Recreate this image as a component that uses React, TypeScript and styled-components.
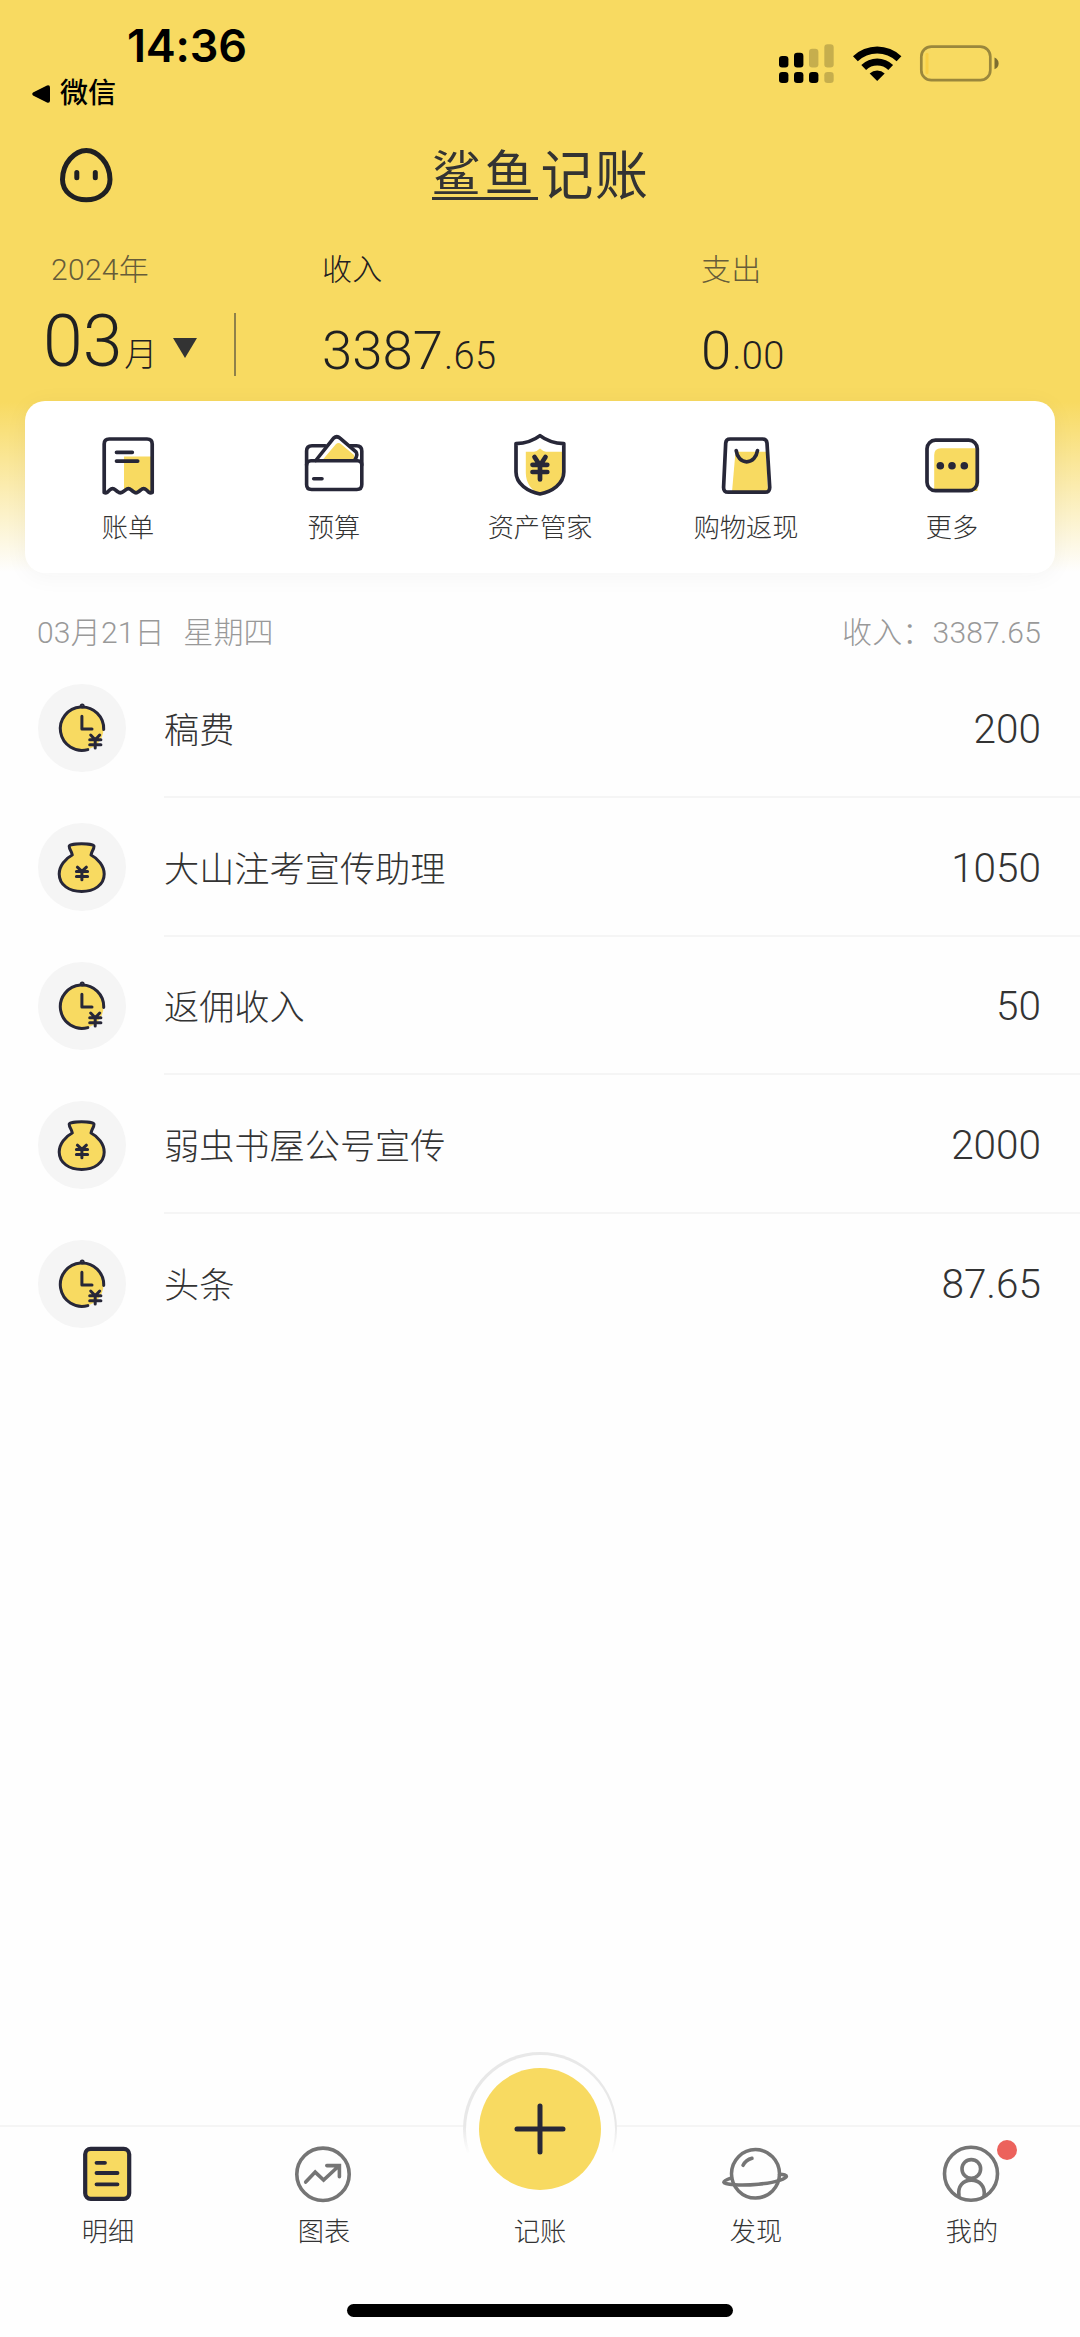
import React from 'react';
import styled, { createGlobalStyle } from 'styled-components';

const YELLOW = '#f8da61';
const INK = '#272738';
const GREY = '#757575';

const GlobalStyle = createGlobalStyle`
  *, *::before, *::after { box-sizing: border-box; }
  body { margin: 0; background: #fefefe; }
  svg { display: block; flex: none; overflow: visible; }
`;

const Screen = styled.div`
  width: 1080px;
  height: 2337px;
  display: flex;
  flex-direction: column;
  overflow: hidden;
  background: linear-gradient(${YELLOW} 0, ${YELLOW} 402px, #fefefe 572px);
  color: #1f2022;
  font-family: Roboto, 'Noto Sans CJK SC', sans-serif;
  font-weight: 300;
`;

const StatusBar = styled.header`
  height: 118px;
  display: flex;
  justify-content: space-between;
  padding: 0 80px 0 32px;
  color: #000;
`;

const StatusLeft = styled.div`
  display: flex;
  flex-direction: column;
`;

const Clock = styled.time`
  margin: 21px 0 0 95px;
  font: 600 45px/50px Inter, sans-serif;
  letter-spacing: -0.2px;
`;

const BackLink = styled.div`
  display: flex;
  align-items: center;
  gap: 10px;
  margin-top: 3px;
  font-size: 28px;
  line-height: 40px;
  font-weight: 500;
`;

const StatusIcons = styled.div`
  display: flex;
  align-items: flex-start;
  gap: 18px;
  padding-top: 44px;
`;

const TitleBar = styled.div`
  height: 117px;
  display: grid;
  grid-template-columns: 1fr auto 1fr;
  align-items: center;
  padding: 0 59px 3px;
`;

const Logo = styled.h1`
  margin: 0 -1px 0 0;
  height: 50px;
  display: flex;
  align-items: flex-start;
  font: 400 53px/44px 'Noto Sans CJK SC', sans-serif;
  letter-spacing: 1.5px;
  color: #333;
`;

const LogoUnderlined = styled.span`
  width: 106px;
  height: 50px;
  margin-right: 3px;
  border-bottom: 3px solid #333;
  font-size: 49px;
  line-height: 40px;
  letter-spacing: 4px;
`;

const Summary = styled.section`
  height: 166px;
  display: flex;
`;

const MonthPicker = styled.div`
  width: 236px;
  padding: 15px 0 0 43px;
  display: flex;
  flex-direction: column;
`;

const Label = styled.div<{ $muted?: boolean; $indent?: number }>`
  height: 40px;
  line-height: 40px;
  font-size: 30px;
  letter-spacing: 0.3px;
  white-space: nowrap;
  padding-left: ${p => p.$indent ?? 0}px;
  color: ${p => (p.$muted ? '#665c39' : '#1f2022')};
`;

const MonthRow = styled.div`
  display: flex;
  align-items: center;
  justify-content: space-between;
  height: 63px;
  margin-top: 23px;
  border-right: 2px solid #8f814a;
`;

const MonthValue = styled.div`
  display: flex;
  align-items: baseline;
  padding-top: 7px;
  font-size: 71.5px;
  line-height: 63px;
  small { font-size: 33px; margin-left: 2px; }
`;

const Caret = styled.div`
  width: 0;
  margin: 7px 37px 0 0;
  border: 12px solid transparent;
  border-top: 20px solid #333;
  border-bottom: 0;
`;

const Total = styled.div<{ $width: number }>`
  width: ${p => p.$width}px;
  padding: 15px 0 0;
`;

const Totals = styled.div`
  display: flex;
  padding-left: 86px;
`;

const Money = styled.div`
  margin-top: 28px;
  font-size: 54.5px;
  line-height: 64px;
  small { font-size: 38px; letter-spacing: 0.4px; margin-left: 1px; }
`;

const MenuCard = styled.nav`
  width: 1030px;
  height: 172px;
  margin: 0 25px;
  flex: none;
  display: grid;
  grid-template-columns: repeat(5, 1fr);
  background: #fff;
  border-radius: 20px;
  box-shadow: 0 3px 24px rgba(40, 40, 40, 0.045);
`;

const MenuItem = styled.div`
  display: flex;
  flex-direction: column;
  align-items: center;
  padding-top: 31px;
  font-size: 26.2px;
  line-height: 36px;
  color: #333;
  gap: 12px;
`;

const DayHeader = styled.div`
  display: flex;
  justify-content: space-between;
  align-items: center;
  flex: none;
  height: 54px;
  margin-top: 30px;
  margin-bottom: 2px;
  padding: 0 39px 0 37px;
  font-size: 30px;
  letter-spacing: 0.2px;
  word-spacing: 1.7px;
  color: #999;
  white-space: pre;
`;

const List = styled.ul`
  margin: 0;
  padding: 0 0 0 38px;
  list-style: none;
`;

const Row = styled.li`
  display: flex;
  align-items: center;
  height: 138.8px;
  gap: 38px;
`;

const Badge = styled.div`
  width: 88px;
  height: 88px;
  border-radius: 50%;
  background: #f5f5f5;
  flex: none;
`;

const RowBody = styled.div<{ $last: boolean }>`
  flex: 1;
  height: 100%;
  display: flex;
  align-items: center;
  justify-content: space-between;
  padding-right: 39px;
  border-bottom: 2px solid ${p => (p.$last ? 'transparent' : '#f5f5f5')};
  font-size: 35.2px;
  color: #333;
`;

const Amount = styled.span`
  padding-top: 3px;
  font-size: 40.5px;
`;

const TabBar = styled.nav`
  position: relative;
  margin-top: auto;
  height: 212px;
  flex: none;
  display: flex;
  flex-direction: column;
  align-items: center;
  justify-content: space-between;
  padding-bottom: 20px;
  background: #fefefe;
  border-top: 2px solid #f5f5f5;
`;

const Tabs = styled.div`
  width: 100%;
  display: grid;
  grid-template-columns: repeat(5, 1fr);
`;

const Tab = styled.div`
  position: relative;
  display: flex;
  flex-direction: column;
  align-items: center;
  padding-top: 14px;
  font-size: 26.2px;
  line-height: 36px;
  color: #333;
  gap: 7px;
`;

const IconSlot = styled.div`
  width: 66px;
  height: 66px;
  margin-left: -2px;
`;

const RedDot = styled.i`
  position: absolute;
  top: 13px;
  left: 133px;
  width: 20px;
  height: 20px;
  border-radius: 50%;
  background: #ec625c;
`;

const AddRing = styled.div`
  position: absolute;
  top: -75px;
  left: 463px;
  width: 154px;
  height: 154px;
  border-radius: 50%;
  background: linear-gradient(#e8e8e8 0, #e8e8e8 48%, #fefefe 66%);
  padding: 2.5px;
`;

const AddGap = styled.div`
  width: 100%;
  height: 100%;
  border-radius: 50%;
  background: #fefefe;
  display: grid;
  place-items: center;
`;

const AddButton = styled.div`
  width: 122px;
  height: 122px;
  border-radius: 50%;
  background: ${YELLOW};
  display: grid;
  place-items: center;
`;

const HomeIndicator = styled.div`
  width: 386px;
  height: 13px;
  border-radius: 7px;
  background: #000;
`;

const Stroke = ({ children, color = INK, w = 3.7, size = 66 }: { children: React.ReactNode; color?: string; w?: number; size?: number }) => (
  <svg width={size} height={size} viewBox={`0 0 ${size} ${size}`} fill="none" stroke={color} strokeWidth={w} strokeLinecap="round" strokeLinejoin="round">
    {children}
  </svg>
);

const Signal = () => (
  <svg width="56" height="40" viewBox="0 0 56 40">
    <rect x="0" y="12" width="9.4" height="11.5" rx="3.2" />
    <rect x="15" y="8.7" width="9.4" height="14.8" rx="3.2" />
    <rect x="30" y="4.8" width="9.4" height="18.7" rx="3.2" opacity=".2" />
    <rect x="45.3" y="0.3" width="9.4" height="23.2" rx="3.2" opacity=".2" />
    <rect x="0" y="28" width="9.4" height="11" rx="3.2" />
    <rect x="15" y="28" width="9.4" height="11" rx="3.2" />
    <rect x="30" y="28" width="9.4" height="11" rx="3.2" />
    <rect x="45.3" y="28" width="9.4" height="11" rx="3.2" opacity=".2" />
  </svg>
);

const Wifi = () => (
  <svg width="49" height="38" viewBox="0 0 49 38">
    <path d="M0 12.3a35 35 0 0 1 48.400 0L43.600 17.300a28 28 0 0 0-38.800 0z" />
    <path d="M8.300 20.900a23 23 0 0 1 31.800 0L35.300 26a16 16 0 0 0-22.200 0z" />
    <path d="M16.700 29.500a11 11 0 0 1 15 0L24.200 37z" />
  </svg>
);

const Battery = () => (
  <svg width="80" height="38" viewBox="0 0 80 38">
    <rect x="1.300" y="2.600" width="69" height="33.600" rx="10" fill="none" stroke="#000" strokeOpacity=".38" strokeWidth="2.700" />
    <rect x="5.500" y="8.700" width="3" height="21.500" rx="1.500" fill="#f8cf45" />
    <path d="M74.500 13.500c5.500 2 5.500 9.800 0 11.800z" opacity=".5" />
  </svg>
);

const Face = () => (
  <svg width="54" height="56" viewBox="0 0 54 56" fill="none" stroke="#1f2022" strokeWidth="5" strokeLinecap="round">
    <path d="M27.300 3.400C38.500 3.400 51 16 51 32.500C51 45 40 52.800 27.300 52.800S3.500 45 3.500 32.500C3.500 16 16 3.400 27.300 3.400Z" />
    <path d="M17.800 25.500v5.200M36.300 25.500v5.200" />
  </svg>
);

const BillIcon = () => (
  <Stroke>
    <path d="M29 24.500H56V60L48.600 56.500L41 60.500L33.400 56.500L29 58.500Z" fill={YELLOW} stroke="none" />
    <path d="M9.200 60.500V12Q9.200 7 14.200 7H52Q57.200 7 57.200 12V60.500Q55.500 61.500 54 60.300L51.500 58Q48.600 55.300 45.700 58L43.500 59.700Q41 61.800 38.500 59.700L36.300 58Q33.400 55.300 30.500 58L28 59.700Q25.200 61.800 22.700 59.700L20.500 58Q17.600 55.300 14.700 58L12.200 60.300Q10.700 61.500 9.200 60.500Z" />
    <path d="M21.500 20.300H37.300M21.500 29.100H42.700" />
  </Stroke>
);

const BudgetIcon = () => (
  <Stroke w={3.6}>
    <path d="M21.500 28L34.800 12.200Q37.500 9.800 40.200 12.200L53 23V28Z" fill={YELLOW} stroke="none" />
    <path d="M24.200 13.700H11Q5.600 13.700 5.600 19V52.500Q5.600 57.500 10.600 57.500H55.800Q60.800 57.500 60.800 52.500V19Q60.800 13.700 55.500 13.700H49" />
    <path d="M5.600 33Q5.600 28.700 10 28.700H56.500Q60.800 28.700 60.800 33" />
    <path d="M14.800 28.500L32.600 6.200Q35.800 3.300 39 6.200L54.700 19.600Q57.400 22.500 53.700 28.200" />
    <path d="M12.700 46.700H21" />
  </Stroke>
);

const AssetIcon = () => (
  <Stroke>
    <path d="M18.800 19.700H27Q30.500 19 33 16.500Q35.500 19 39 19.700H56.500V41C56.500 53 43 59 33 61.500C24 59 18.800 50 18.800 41Z" fill={YELLOW} stroke="none" />
    <path d="M33 3.600C26 9 18 11.300 9 11.600V40C9 52 21 59.500 33 62C45 59.500 56.800 52 56.800 40V11.600C48 11.300 40 9 33 3.600Z" />
    <path d="M27.500 25L33 33.500L38.500 25M33 33.500V47.500M25.500 32.800H40.300M25.500 40H40.300" strokeWidth="4.700" />
  </Stroke>
);

const ShopIcon = () => (
  <Stroke>
    <path d="M22.500 19.700H53L55 60H19Z" fill={YELLOW} stroke="none" />
    <path d="M17 7H49.500Q53.700 7 54 11.200L56.700 55Q57 60.200 52 60.200H15.300Q10.300 60.200 10.600 55L12.700 11.200Q13 7 17 7Z" />
    <path d="M23.200 18.500C24 25 28 29.800 33.700 29.800S43.500 25 44.500 18.500" />
  </Stroke>
);

const MoreIcon = () => (
  <Stroke>
    <path d="M22 16.200H58.500V59H15.200V23Q15.200 16.200 22 16.200Z" fill={YELLOW} stroke="none" />
    <rect x="8" y="8.200" width="50.300" height="50.500" rx="8.500" />
    <g fill={INK} stroke="none">
      <circle cx="21.300" cy="33.700" r="3.800" />
      <circle cx="33" cy="33.700" r="3.800" />
      <circle cx="45.300" cy="33.700" r="3.800" />
    </g>
  </Stroke>
);

const PartTimeIcon = () => (
  <Stroke size={88} w={3}>
    <circle cx="44" cy="44.700" r="21.500" fill={YELLOW} stroke="none" />
    <path d="M65.700 45.500A21.700 21.700 0 1 0 49.800 65.600" />
    <circle cx="44.200" cy="22" r="1" />
    <path d="M43.900 32.300V45H54" />
    <g transform="translate(57.200 57)"><path d="M-4.500-6L0-1.300L4.500-6M0-1.300V7M-5.500-1.300H5.700M-5.500 3.700H5.700" /></g>
  </Stroke>
);

const MoneyBagIcon = () => (
  <Stroke size={88} w={3}>
    <path d="M34.300 32C33.800 28 31.200 26.500 31.200 23.200C31.200 20 56 20 56 23.200C56 26.500 53.600 28 53 32C60 35.500 66.200 43 66.200 51C66.200 62 56 68.500 43.700 68.500S21.200 62 21.200 51C21.200 43 27.300 35.500 34.300 32Z" fill={YELLOW} />
    <g transform="translate(43.900 49.700)"><path d="M-4.500-5.500L0-1.300L4.500-5.500M0-1.300V7M-5.500-1.300H5.700M-5.500 3.700H5.700" /></g>
  </Stroke>
);

const DetailIcon = () => (
  <Stroke w={4.2}>
    <rect x="11.200" y="7.800" width="44" height="50" rx="5.500" fill={YELLOW} />
    <path d="M22.500 21.800H31M22.500 32H43.500M22.500 43.300H43.500" strokeWidth="3.800" />
  </Stroke>
);

const ChartIcon = () => (
  <Stroke color={GREY} w={3.6}>
    <g transform="translate(0 .8)">
      <circle cx="33" cy="32.500" r="26.200" />
      <path d="M15.700 40.300L25.200 30.300L33.600 38.300L49 24M36.800 23.800H49.400V35" strokeLinejoin="miter" />
    </g>
  </Stroke>
);

const DiscoverIcon = () => (
  <Stroke color={GREY} w={3.5}>
    <g transform="translate(.5 .8)">
      <ellipse cx="33" cy="32" rx="24" ry="24.200" />
      <path d="M9 36C-1.500 39.500-2 42 12 43C26 44 47 42 57 38.500C66 35.500 66.500 33 57 32.500" />
      <path d="M20.500 23.500Q23.500 18 29.500 16.500" />
    </g>
  </Stroke>
);

const MineIcon = () => (
  <Stroke color={GREY} w={3.6}>
    <g transform="translate(0 .6)">
      <circle cx="33" cy="32.200" r="26.500" />
      <circle cx="33.300" cy="27.300" r="9.300" />
      <path d="M21 54C19.500 45 25 38.500 33.300 38.500S47.500 45 46 54" />
    </g>
  </Stroke>
);

const menu = [
  { label: '账单', icon: <BillIcon /> },
  { label: '预算', icon: <BudgetIcon /> },
  { label: '资产管家', icon: <AssetIcon /> },
  { label: '购物返现', icon: <ShopIcon /> },
  { label: '更多', icon: <MoreIcon /> },
];

const records = [
  { name: '稿费', amount: '200', kind: 'time' },
  { name: '大山注考宣传助理', amount: '1050', kind: 'bag' },
  { name: '返佣收入', amount: '50', kind: 'time' },
  { name: '弱虫书屋公号宣传', amount: '2000', kind: 'bag' },
  { name: '头条', amount: '87.65', kind: 'time' },
];

const tabs = [
  { label: '明细', icon: <DetailIcon /> },
  { label: '图表', icon: <ChartIcon /> },
  { label: '记账', icon: null },
  { label: '发现', icon: <DiscoverIcon /> },
  { label: '我的', icon: <MineIcon />, dot: true },
];

export default function App() {
  return (
    <>
      <GlobalStyle />
      <Screen>
        <StatusBar>
          <StatusLeft>
            <Clock>14:36</Clock>
            <BackLink>
              <svg width="18" height="18" viewBox="0 0 18 18"><path d="M1 7.500L15 .5Q18 -.3 18 2.500V15.500Q18 18.300 15 17.500L1 10.500Q-.8 9 1 7.500Z" /></svg>
              <span>微信</span>
            </BackLink>
          </StatusLeft>
          <StatusIcons>
            <Signal />
            <Wifi />
            <Battery />
          </StatusIcons>
        </StatusBar>

        <TitleBar>
          <Face />
          <Logo>
            <LogoUnderlined>鲨鱼</LogoUnderlined>
            <span>记账</span>
          </Logo>
        </TitleBar>

        <Summary>
          <MonthPicker>
            <Label $muted $indent={8}>2024年</Label>
            <MonthRow>
              <MonthValue>03<small>月</small></MonthValue>
              <Caret />
            </MonthRow>
          </MonthPicker>
          <Totals>
            <Total $width={379}>
              <Label>收入</Label>
              <Money>3387<small>.65</small></Money>
            </Total>
            <Total $width={300}>
              <Label $muted>支出</Label>
              <Money>0<small>.00</small></Money>
            </Total>
          </Totals>
        </Summary>

        <MenuCard>
          {menu.map(m => (
            <MenuItem key={m.label}>{m.icon}<span>{m.label}</span></MenuItem>
          ))}
        </MenuCard>

        <DayHeader>
          <span>{'03月21日  星期四'}</span>
          <span>收入：3387.65</span>
        </DayHeader>
        <List>
          {records.map((r, i) => (
            <Row key={r.name}>
              <Badge>{r.kind === 'time' ? <PartTimeIcon /> : <MoneyBagIcon />}</Badge>
              <RowBody $last={i === records.length - 1}>
                <span>{r.name}</span>
                <Amount>{r.amount}</Amount>
              </RowBody>
            </Row>
          ))}
        </List>

        <TabBar>
          <AddRing>
            <AddGap>
              <AddButton>
                <svg width="52" height="52" viewBox="0 0 52 52" stroke={INK} strokeWidth="5" strokeLinecap="round"><path d="M26 3V49M3 26H49" /></svg>
              </AddButton>
            </AddGap>
          </AddRing>
          <Tabs>
            {tabs.map(t => (
              <Tab key={t.label}>
                <IconSlot>{t.icon}</IconSlot>
                <span>{t.label}</span>
                {t.dot && <RedDot />}
              </Tab>
            ))}
          </Tabs>
          <HomeIndicator />
        </TabBar>
      </Screen>
    </>
  );
}
